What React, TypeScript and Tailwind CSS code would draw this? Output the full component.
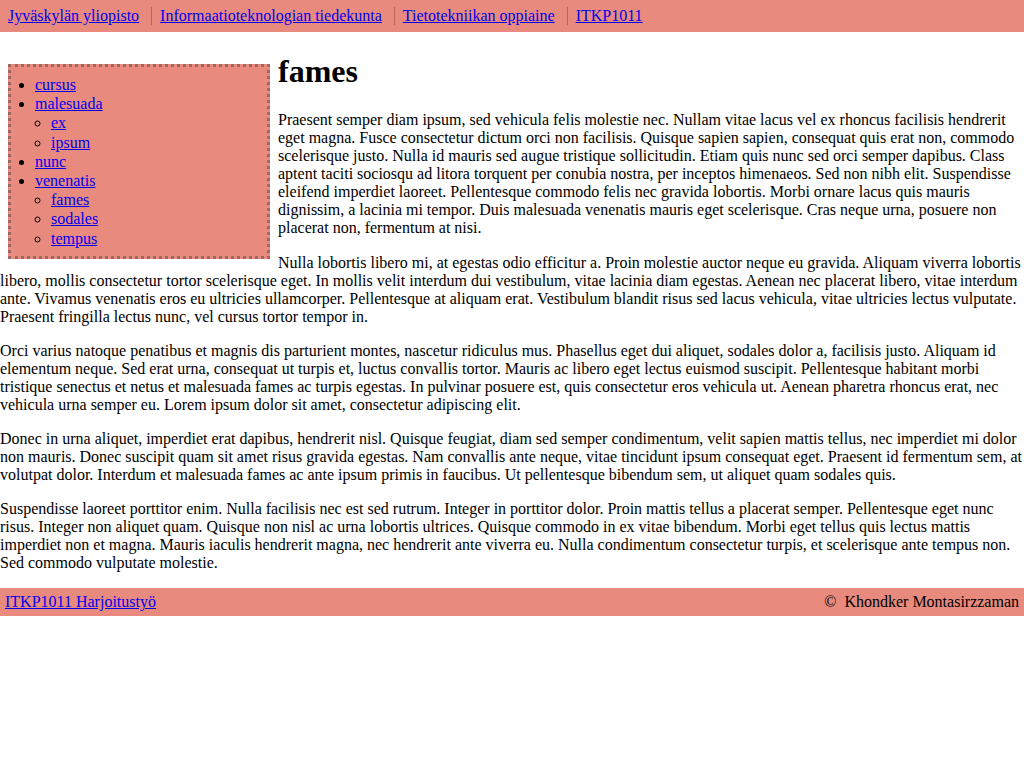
export default function App() {
  const crumbs = [
    "Jyväskylän yliopisto",
    "Informaatioteknologian tiedekunta",
    "Tietotekniikan oppiaine",
    "ITKP1011",
  ];
  return (
    <div className="font-['Liberation_Serif',serif] text-base text-black bg-white">
      {/* top bar */}
      <header className="h-8 bg-[#e88a7d] flex items-center">
        <ul className="flex items-center">
          {crumbs.map((c, i) => (
            <li
              key={c}
              className={
                i === 0
                  ? "px-2 leading-[18px]"
                  : "ml-1 px-2 border-l border-[#b8685c] leading-[18px]"
              }
            >
              <a href="#" className="text-[#0000ee] underline">
                {c}
              </a>
            </li>
          ))}
        </ul>
      </header>

      <main className="flow-root">
        {/* side nav */}
        <nav className="float-left w-[262px] mt-8 ml-2 mr-2 mb-2 bg-[#e88a7d] border-[3px] border-dotted border-[#9a6a61]">
          <ul className="list-disc pl-6 my-2 leading-[19.2px]">
            <li>
              <a href="#" className="text-[#0000ee] underline">cursus</a>
            </li>
            <li>
              <a href="#" className="text-[#0000ee] underline">malesuada</a>
              <ul className="list-[circle] pl-4">
                <li>
                  <a href="#" className="text-[#0000ee] underline">ex</a>
                </li>
                <li>
                  <a href="#" className="text-[#0000ee] underline">ipsum</a>
                </li>
              </ul>
            </li>
            <li>
              <a href="#" className="text-[#0000ee] underline">nunc</a>
            </li>
            <li>
              <a href="#" className="text-[#0000ee] underline">venenatis</a>
              <ul className="list-[circle] pl-4">
                <li>
                  <a href="#" className="text-[#0000ee] underline">fames</a>
                </li>
                <li>
                  <a href="#" className="text-[#0000ee] underline">sodales</a>
                </li>
                <li>
                  <a href="#" className="text-[#0000ee] underline">tempus</a>
                </li>
              </ul>
            </li>
          </ul>
        </nav>

        <h1 className="text-[32px] font-bold leading-[37px] mt-[21px] mb-[21px]">fames</h1>

        <div className="leading-[18px]">
          <p className="mt-4 mb-[17px]">
            Praesent semper diam ipsum, sed vehicula felis molestie nec. Nullam vitae lacus vel ex rhoncus facilisis hendrerit eget magna. Fusce consectetur dictum orci non facilisis. Quisque sapien sapien, consequat quis erat non, commodo scelerisque justo. Nulla id mauris sed augue tristique sollicitudin. Etiam quis nunc sed orci semper dapibus. Class aptent taciti sociosqu ad litora torquent per conubia nostra, per inceptos himenaeos. Sed non nibh elit. Suspendisse eleifend imperdiet laoreet. Pellentesque commodo felis nec gravida lobortis. Morbi ornare lacus quis mauris dignissim, a lacinia mi tempor. Duis malesuada venenatis mauris eget scelerisque. Cras neque urna, posuere non placerat non, fermentum at nisi.
          </p>
          <p className="my-4">
            Nulla lobortis libero mi, at egestas odio efficitur a. Proin molestie auctor neque eu gravida. Aliquam viverra lobortis libero, mollis consectetur tortor scelerisque eget. In mollis velit interdum dui vestibulum, vitae lacinia diam egestas. Aenean nec placerat libero, vitae interdum ante. Vivamus venenatis eros eu ultricies ullamcorper. Pellentesque at aliquam erat. Vestibulum blandit risus sed lacus vehicula, vitae ultricies lectus vulputate. Praesent fringilla lectus nunc, vel cursus tortor tempor in.
          </p>
          <p className="my-4">
            Orci varius natoque penatibus et magnis dis parturient montes, nascetur ridiculus mus. Phasellus eget dui aliquet, sodales dolor a, facilisis justo. Aliquam id elementum neque. Sed erat urna, consequat ut turpis et, luctus convallis tortor. Mauris ac libero eget lectus euismod suscipit. Pellentesque habitant morbi tristique senectus et netus et malesuada fames ac turpis egestas. In pulvinar posuere est, quis consectetur eros vehicula ut. Aenean pharetra rhoncus erat, nec vehicula urna semper eu. Lorem ipsum dolor sit amet, consectetur adipiscing elit.
          </p>
          <p className="my-4">
            Donec in urna aliquet, imperdiet erat dapibus, hendrerit nisl. Quisque feugiat, diam sed semper condimentum, velit sapien mattis tellus, nec imperdiet mi dolor non mauris. Donec suscipit quam sit amet risus gravida egestas. Nam convallis ante neque, vitae tincidunt ipsum consequat eget. Praesent id fermentum sem, at volutpat dolor. Interdum et malesuada fames ac ante ipsum primis in faucibus. Ut pellentesque bibendum sem, ut aliquet quam sodales quis.
          </p>
          <p className="my-4">
            Suspendisse laoreet porttitor enim. Nulla facilisis nec est sed rutrum. Integer in porttitor dolor. Proin mattis tellus a placerat semper. Pellentesque eget nunc risus. Integer non aliquet quam. Quisque non nisl ac urna lobortis ultrices. Quisque commodo in ex vitae bibendum. Morbi eget tellus quis lectus mattis imperdiet non et magna. Mauris iaculis hendrerit magna, nec hendrerit ante viverra eu. Nulla condimentum consectetur turpis, et scelerisque ante tempus non. Sed commodo vulputate molestie.
          </p>
        </div>
      </main>

      {/* footer */}
      <footer className="h-7 bg-[#e88a7d] flex items-center justify-between px-[5px] leading-[18px]">
        <a href="#" className="text-[#0000ee] underline">ITKP1011 Harjoitustyö</a>
        <span>©&nbsp; Khondker Montasirzzaman</span>
      </footer>
    </div>
  );
}
